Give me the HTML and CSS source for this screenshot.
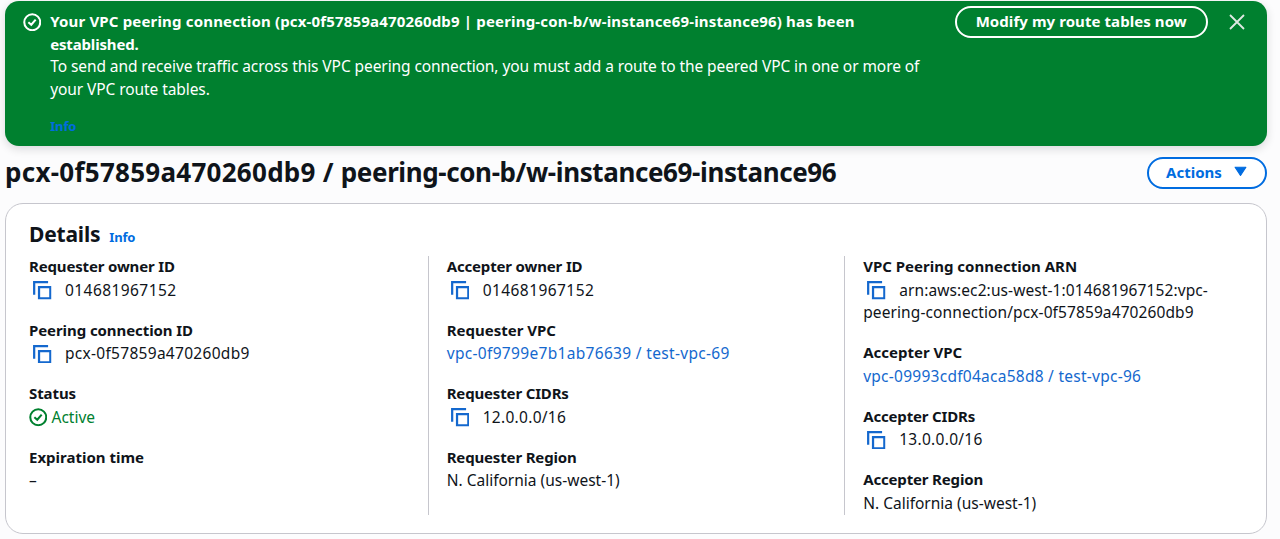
FILE: index.html
```html
<!DOCTYPE html>
<html lang="en">
<head>
<meta charset="utf-8">
<title>Peering connection details</title>
<link rel="stylesheet" href="styles.css">
</head>
<body>
<svg class="symbols" aria-hidden="true">
  <symbol id="copy" viewBox="0 0 19 19"><path d="M1.2 14V1.2H15.5M6.2 6.2H17.8V17.8H6.2Z" fill="none" stroke="currentColor" stroke-width="2.3"/></symbol>
  <symbol id="check" viewBox="0 0 19 19"><circle cx="9.5" cy="9.5" r="8.2" fill="none" stroke="currentColor" stroke-width="2.1"/><path d="M5.5 9.4L8.5 12L13 6.8" fill="none" stroke="currentColor" stroke-width="2.1"/></symbol>
</svg>
<div class="banner">
  <svg class="banner-icon"><use href="#check"/></svg>
  <div class="banner-text">
    <strong><span class="title-line">Your VPC peering connection (pcx-0f57859a470260db9 | peering-con-b/w-instance69-instance96) has been</span><br><span class="tight">established.</span></strong>
    <p>To send and receive traffic across this VPC peering connection, you must add a route to the peered VPC in one or more of<br>your VPC route tables.</p>
    <a class="info banner-info">Info</a>
  </div>
  <button class="banner-button">Modify my route tables now</button>
  <svg class="close" viewBox="0 0 16 16"><path d="M1 1L15 15M15 1L1 15" fill="none" stroke="currentColor" stroke-width="1.8"/></svg>
</div>
<header class="heading">
  <h1><span class="heading-id">pcx-0f57859a470260db9 / </span>peering-con-b/w-instance69-instance96</h1>
  <button class="actions">Actions<svg class="caret" viewBox="0 0 12 10"><path d="M1 1H11L6 8.7Z" fill="currentColor" stroke="currentColor" stroke-linejoin="round"/></svg></button>
</header>
<section class="card">
  <div class="card-title"><h2>Details</h2><a class="info">Info</a></div>
  <div class="columns">
    <dl class="col">
      <div><dt class="tight">Requester owner ID</dt><dd><svg class="copy"><use href="#copy"/></svg><span class="digits">014681967152</span></dd></div>
      <div><dt class="snug">Peering connection ID</dt><dd><svg class="copy"><use href="#copy"/></svg><span class="ident">pcx-0f57859a470260db9</span></dd></div>
      <div><dt class="snug">Status</dt><dd class="status"><svg class="status-icon"><use href="#check"/></svg>Active</dd></div>
      <div><dt>Expiration time</dt><dd>–</dd></div>
    </dl>
    <dl class="col">
      <div><dt class="tight">Accepter owner ID</dt><dd><svg class="copy"><use href="#copy"/></svg><span class="digits">014681967152</span></dd></div>
      <div><dt>Requester VPC</dt><dd><a class="link link-requester">vpc-0f9799e7b1ab76639 / test-vpc-69</a></dd></div>
      <div><dt class="tight">Requester CIDRs</dt><dd><svg class="copy"><use href="#copy"/></svg><span class="ident">12.0.0.0/16</span></dd></div>
      <div><dt class="tight">Requester Region</dt><dd>N. California (us-west-1)</dd></div>
    </dl>
    <dl class="col">
      <div><dt>VPC Peering connection ARN</dt><dd class="arn"><svg class="copy"><use href="#copy"/></svg>arn:aws:ec2:us-west-1:014681967152:vpc-<br>peering-connection/pcx-0f57859a470260db9</dd></div>
      <div><dt>Accepter VPC</dt><dd><a class="link">vpc-09993cdf04aca58d8 / test-vpc-96</a></dd></div>
      <div><dt class="tight">Accepter CIDRs</dt><dd><svg class="copy"><use href="#copy"/></svg><span class="ident">13.0.0.0/16</span></dd></div>
      <div><dt class="tight">Accepter Region</dt><dd>N. California (us-west-1)</dd></div>
    </dl>
  </div>
</section>
</body>
</html>
```
FILE: styles.css
```css
* { box-sizing: border-box; }
body {
  margin: 0;
  height: 539px;
  padding: 1px 13.5px 0 5px;
  overflow: hidden;
  background: #fcfcfd;
  color: #0f141a;
  font: 15.5px/22.7px "Noto Sans", sans-serif;
}
h1, h2, p, dl, dt, dd { margin: 0; }
button { font: 700 15px/22px "Noto Sans", sans-serif; padding: 0 0 2px; border-radius: 16px; }
.symbols { display: none; }

.banner {
  display: flex;
  align-items: flex-start;
  height: 145px;
  padding: 0 21.5px 0 17.5px;
  border-radius: 14px;
  background: #00802f;
  color: #fff;
  box-shadow: 0 3px 10px rgba(0, 7, 22, 0.14);
}
.banner-icon { width: 18.5px; height: 18.5px; margin: 11.5px 9.2px 0 0; flex: none; }
.banner-text { width: 904.5px; padding-top: 9px; flex: none; white-space: nowrap; }
.banner-text strong { display: block; font-size: 15px; }
.banner-text p { letter-spacing: -0.08px; }
.title-line { letter-spacing: 0.17px; }
.banner-button {
  width: 253px;
  height: 32px;
  margin-top: 5px;
  flex: none;
  border: 2px solid #fff;
  background: none;
  color: #fff;
  letter-spacing: 0.07px;
}
.close { width: 16px; height: 16px; margin: 12.5px 0 0 auto; color: #dfe9e3; }
.info { color: #006ce0; font-weight: 700; font-size: 13px; letter-spacing: -0.15px; }
.banner-info { display: block; margin-top: 14px; }

.heading { display: flex; justify-content: space-between; align-items: center; height: 57px; padding-bottom: 4px; }
h1 { font-size: 26px; line-height: 34px; letter-spacing: -0.39px; white-space: nowrap; padding-bottom: 2px; }
.heading-id { letter-spacing: 0.27px; }
.actions {
  display: flex;
  align-items: center;
  justify-content: center;
  gap: 12px;
  width: 120px;
  height: 32px;
  border: 2px solid #006ce0;
  background: #fff;
  color: #006ce0;
}
.caret { width: 13px; height: 11px; }

.card {
  height: 331px;
  border: 1px solid #c6c6cd;
  border-radius: 18px;
  background: #fff;
  padding: 16px 22px 0 23px;
}
.card-title { display: flex; align-items: baseline; gap: 9px; height: 36px; }
h2 { font-size: 21px; line-height: 28px; letter-spacing: -0.2px; }
.columns { display: grid; grid-template-columns: 398.5px 416.5px 1fr; height: 259px; white-space: nowrap; }
.col { display: flex; flex-direction: column; gap: 18.15px; }
.col + .col { border-left: 1px solid #c6c6cd; padding-left: 18.2px; }
dt { font-weight: 700; font-size: 15px; line-height: 21.7px; padding-bottom: 1px; }
.tight { letter-spacing: -0.16px; }
.snug { letter-spacing: -0.08px; }
.copy { width: 18.5px; height: 18.5px; margin: 0 13.5px 0 4px; vertical-align: -4px; color: #1468ce; }
dd { height: 22.7px; }
.arn { height: 45.4px; letter-spacing: 0.1px; }
.digits { letter-spacing: 0.43px; }
.ident { letter-spacing: 0.29px; }
.link { color: #1468ce; letter-spacing: 0.26px; }
.link-requester { letter-spacing: 0.32px; }
.status { color: #00802f; }
.status-icon { width: 18.5px; height: 18.5px; margin: 0 4.5px 0 -0.5px; vertical-align: -4px; }
```
